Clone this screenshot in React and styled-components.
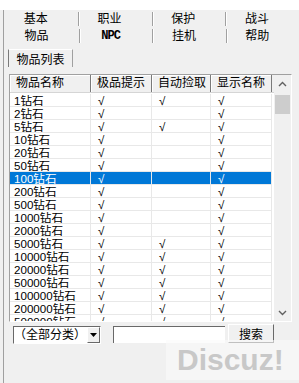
import React from 'react';
import styled, { createGlobalStyle } from 'styled-components';

const GlobalStyle = createGlobalStyle`
  body {
    margin: 0;
    background: #f0f0f0;
  }
`;

const rows = [
  { name: '1钻石', pick: true },
  { name: '2钻石', pick: false },
  { name: '5钻石', pick: true },
  { name: '10钻石', pick: false },
  { name: '20钻石', pick: false },
  { name: '50钻石', pick: false },
  { name: '100钻石', pick: false, selected: true },
  { name: '200钻石', pick: false },
  { name: '500钻石', pick: false },
  { name: '1000钻石', pick: false },
  { name: '2000钻石', pick: false },
  { name: '5000钻石', pick: true },
  { name: '10000钻石', pick: true },
  { name: '20000钻石', pick: true },
  { name: '50000钻石', pick: true },
  { name: '100000钻石', pick: true },
  { name: '200000钻石', pick: true },
  { name: '500000钻石', pick: true },
];

const cols = ['81px', '61px', '59px', '61px'];

const App = () => {
  return (
    <>
      <GlobalStyle />
      <Page>
        <TopStrip />
        <Frame>
          <TabRow>
            <Tab>基本</Tab>
            <Tab>职业</Tab>
            <Tab>保护</Tab>
            <Tab $last>战斗</Tab>
          </TabRow>
          <TabRow>
            <Tab $first>物品</Tab>
            <Tab><TabLatin>NPC</TabLatin></Tab>
            <Tab>挂机</Tab>
            <Tab $last>帮助</Tab>
          </TabRow>
          <Body>
            <SubTabs>
              <SubTab>物品列表</SubTab>
            </SubTabs>
            <ListView>
              <ListMain>
                <HeaderRow>
                  <HeaderCell $w={cols[0]}>物品名称</HeaderCell>
                  <HeaderCell $w={cols[1]}>极品提示</HeaderCell>
                  <HeaderCell $w={cols[2]}>自动捡取</HeaderCell>
                  <HeaderCell $w={cols[3]}>显示名称</HeaderCell>
                </HeaderRow>
                <Rows>
                  {rows.map((r) => (
                    <Row key={r.name} $selected={r.selected}>
                      <Cell $w={cols[0]} $name>{r.name}</Cell>
                      <Cell $w={cols[1]}><Tick>√</Tick></Cell>
                      <Cell $w={cols[2]}>{r.pick && <Tick>√</Tick>}</Cell>
                      <Cell $w={cols[3]}><Tick>√</Tick></Cell>
                    </Row>
                  ))}
                </Rows>
              </ListMain>
              <ScrollBar>
                <ScrollArrow>
                  <svg width="9" height="6" viewBox="0 0 9 6">
                    <path d="M1 5 L4.5 1.5 L8 5" fill="none" stroke="#606060" strokeWidth="1.4" />
                  </svg>
                </ScrollArrow>
                <Track>
                  <Thumb />
                </Track>
                <ScrollArrow>
                  <svg width="9" height="6" viewBox="0 0 9 6">
                    <path d="M1 1 L4.5 4.5 L8 1" fill="none" stroke="#606060" strokeWidth="1.4" />
                  </svg>
                </ScrollArrow>
              </ScrollBar>
            </ListView>
            <Controls>
              <Combo>
                <ComboText>（全部分类）</ComboText>
                <ComboButton>
                  <svg width="7" height="4" viewBox="0 0 7 4">
                    <path d="M0 0 H7 L3.5 4 Z" fill="#000" />
                  </svg>
                </ComboButton>
              </Combo>
              <SearchInput />
              <SearchButton>搜索</SearchButton>
            </Controls>
          </Body>
        </Frame>
        <Watermark>Discuz!</Watermark>
      </Page>
    </>
  );
};

const Page = styled.div`
  position: relative;
  width: 299px;
  height: 383px;
  overflow: hidden;
  background: #f0f0f0;
  font-family: "Liberation Sans", "Noto Sans CJK SC", sans-serif;
  font-size: 12px;
  color: #000000;
`;

const TopStrip = styled.div`
  height: 10px;
  background: #ffffff;
`;

const Frame = styled.div`
  margin-left: 3px;
  height: 373px;
  border-left: 1px solid #a0a0a0;
  display: flex;
  flex-direction: column;
`;

const TabRow = styled.div`
  display: flex;
  height: 17px;
`;

const Tab = styled.div`
  flex: ${(p) => (p.$first ? '0 0 75px' : '1')};
  position: relative;
  display: flex;
  align-items: center;
  justify-content: center;
  padding: 1px 10px 0 0;
  box-sizing: border-box;
  line-height: 16px;

  &::after {
    content: ${(p) => (p.$last ? 'none' : '""')};
    position: absolute;
    right: -1px;
    top: 2px;
    bottom: 1px;
    width: 1px;
    background: #a0a0a0;
    box-shadow: 1px 0 0 #ffffff;
  }
`;

const TabLatin = styled.span`
  font-family: "Liberation Mono", monospace;
  font-weight: 700;
  font-size: 12px;
  letter-spacing: -1px;
`;

const Body = styled.div`
  flex: 1;
  display: flex;
  flex-direction: column;
  padding: 5px 7px 0 4px;
`;

const SubTabs = styled.div`
  display: flex;
  height: 18px;
`;

const SubTab = styled.div`
  width: 65px;
  display: flex;
  align-items: center;
  justify-content: center;
  box-sizing: border-box;
  border-left: 1px solid #7a7a7a;
  border-top: 1px solid #ffffff;
  border-right: 1px solid #a0a0a0;
  background: #f0f0f0;
`;

const ListView = styled.div`
  margin-top: 7px;
  margin-left: 1px;
  height: 248px;
  display: flex;
  border-top: 1px solid #a0a0a0;
  border-left: 1px solid #a0a0a0;
  border-right: 1px solid #ffffff;
  border-bottom: 1px solid #ffffff;
  background: #ffffff;
  box-sizing: border-box;
  overflow: hidden;
`;

const ListMain = styled.div`
  flex: 1;
  display: flex;
  flex-direction: column;
  overflow: hidden;
`;

const HeaderRow = styled.div`
  display: flex;
  height: 17px;
  background: #f0f0f0;
  border-bottom: 1px solid #d5d5d5;
  flex-shrink: 0;
`;

const HeaderCell = styled.div`
  width: ${(p) => p.$w};
  flex-shrink: 0;
  box-sizing: border-box;
  padding-left: 6px;
  line-height: 17px;
  border-right: 1px solid #7a7a7a;
  box-shadow: inset 1px 1px 0 #ffffff;
  white-space: nowrap;
`;

const Rows = styled.div`
  display: flex;
  flex-direction: column;
  padding-top: 1px;
  font-size: 11.6px;
`;

const Row = styled.div`
  display: flex;
  height: 13px;
  background: ${(p) => (p.$selected ? '#0078d7' : '#ffffff')};
  color: ${(p) => (p.$selected ? '#ffffff' : '#000000')};
  width: 262px;
`;

const Cell = styled.div`
  width: ${(p) => p.$w};
  flex-shrink: 0;
  box-sizing: border-box;
  padding-left: ${(p) => (p.$name ? '4px' : '7px')};
  line-height: 13px;
  border-right: 1px solid #e8e8e8;
  border-bottom: 1px solid #e8e8e8;
  white-space: nowrap;
  overflow: hidden;
`;

const Tick = styled.span`
  font-family: "Liberation Sans", sans-serif;
  font-size: 11.6px;
  line-height: 13px;
`;

const ScrollBar = styled.div`
  width: 17px;
  display: flex;
  flex-direction: column;
  background: #f0f0f0;
`;

const ScrollArrow = styled.div`
  height: 17px;
  display: flex;
  align-items: center;
  justify-content: center;
`;

const Track = styled.div`
  flex: 1;
  padding: 3px 1px 0;
`;

const Thumb = styled.div`
  height: 19px;
  background: #cdcdcd;
`;

const Controls = styled.div`
  display: flex;
  align-items: flex-start;
  margin-top: 2px;
  padding-left: 5px;
`;

const Combo = styled.div`
  width: 88px;
  height: 18px;
  display: flex;
  box-sizing: border-box;
  border-top: 1px solid #696969;
  border-left: 1px solid #696969;
  border-right: 1px solid #ffffff;
  border-bottom: 1px solid #ffffff;
  background: #ffffff;
  margin-top: 2px;
`;

const ComboText = styled.div`
  flex: 1;
  line-height: 16px;
  white-space: nowrap;
  overflow: hidden;
`;

const ComboButton = styled.div`
  width: 13px;
  display: flex;
  align-items: center;
  justify-content: center;
  background: #f0f0f0;
  border-left: 1px solid #ffffff;
  border-top: 1px solid #ffffff;
  border-right: 1px solid #696969;
  border-bottom: 1px solid #696969;
  box-sizing: border-box;
`;

const SearchInput = styled.div`
  width: 112px;
  height: 17px;
  margin-left: 12px;
  margin-top: 2px;
  box-sizing: border-box;
  background: #ffffff;
  border-top: 1px solid #696969;
  border-left: 1px solid #696969;
`;

const SearchButton = styled.div`
  width: 46px;
  height: 19px;
  margin-left: 3px;
  box-sizing: border-box;
  display: flex;
  align-items: center;
  justify-content: center;
  background: #f0f0f0;
  border-top: 1px solid #ffffff;
  border-left: 1px solid #ffffff;
  border-right: 1px solid #696969;
  border-bottom: 1px solid #696969;
`;

const Watermark = styled.div`
  position: absolute;
  left: 166px;
  top: 340px;
  width: 133px;
  height: 40px;
  background: rgba(250, 250, 250, 0.6);
  color: #c8c8c8;
  font-family: "Liberation Sans", sans-serif;
  font-weight: 700;
  font-size: 30px;
  line-height: 40px;
  padding-left: 11px;
  box-sizing: border-box;
`;

export default App;
